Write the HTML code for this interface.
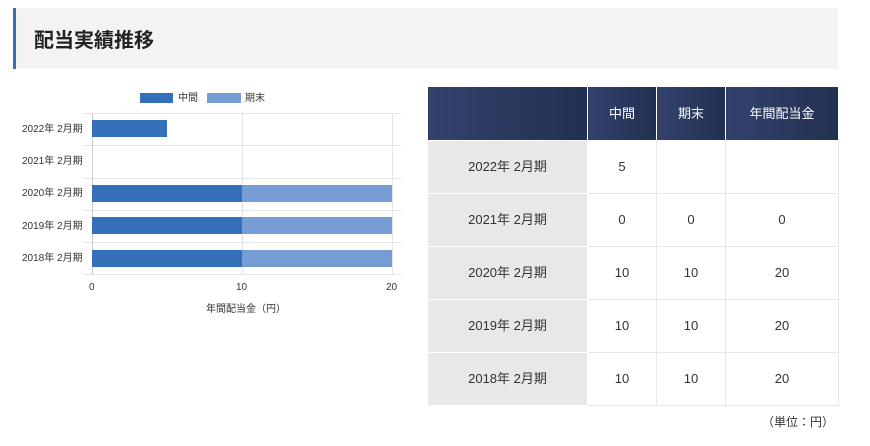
<!DOCTYPE html>
<html><head><meta charset="utf-8"><style>
*{margin:0;padding:0;box-sizing:border-box}
body{width:870px;height:446px;background:#fff;font-family:"Liberation Sans","Noto Sans CJK JP",sans-serif;position:relative;overflow:hidden;color:#333}
.hd{position:absolute;left:13px;top:8px;width:825px;height:61px;background:#f3f3f3;border-left:3px solid #3a6fb5}
.hd span{position:absolute;left:18px;top:16px;font-size:20px;font-weight:bold;color:#222}
.a{position:absolute;font-size:10px;line-height:12px;color:#333;white-space:nowrap}
.bar{position:absolute;height:17px}
.d{background:#3470b9}.l{background:#769dd3}
.g{position:absolute;background:#e4e4e4}
table{position:absolute;left:427px;top:86px;border-collapse:collapse;font-size:13px}
td,th{border:1px solid #e8e8e8;text-align:center;height:53px;line-height:16px;vertical-align:middle}
th{background:linear-gradient(90deg,#33426e,#22304f);color:#fff;font-weight:normal;border-color:#fff;height:54px}
td.y{background:#e8e8e8;border-color:#fff}
</style></head><body>
<div class="hd"><span>配当実績推移</span></div>
<div class="bar d" style="left:140px;top:93px;width:33px;height:10px"></div><div class="a" style="left:178px;top:93px">中間</div>
<div class="bar l" style="left:207px;top:93px;width:34px;height:10px"></div><div class="a" style="left:245px;top:93px">期末</div>
<div class="g" style="left:84px;top:113px;width:317px;height:1px"></div>
<div class="g" style="left:84px;top:145px;width:317px;height:1px"></div>
<div class="g" style="left:84px;top:178px;width:317px;height:1px"></div>
<div class="g" style="left:84px;top:210px;width:317px;height:1px"></div>
<div class="g" style="left:84px;top:242px;width:317px;height:1px"></div>
<div class="g" style="left:84px;top:274px;width:317px;height:1px"></div>
<div class="g" style="left:92px;top:113px;width:1px;height:162px;background:#ccc"></div>
<div class="g" style="left:242px;top:113px;width:1px;height:162px"></div>
<div class="g" style="left:392px;top:113px;width:1px;height:162px"></div>
<div class="bar d" style="left:92px;top:120px;width:75px"></div>
<div class="bar d" style="left:92px;top:185px;width:150px"></div><div class="bar l" style="left:242px;top:185px;width:150px"></div>
<div class="bar d" style="left:92px;top:217px;width:150px"></div><div class="bar l" style="left:242px;top:217px;width:150px"></div>
<div class="bar d" style="left:92px;top:250px;width:150px"></div><div class="bar l" style="left:242px;top:250px;width:150px"></div>
<div class="a" style="left:22px;top:124px">2022年 2月期</div>
<div class="a" style="left:22px;top:156px">2021年 2月期</div>
<div class="a" style="left:22px;top:188px">2020年 2月期</div>
<div class="a" style="left:22px;top:221px">2019年 2月期</div>
<div class="a" style="left:22px;top:253px">2018年 2月期</div>
<div class="a" style="left:89px;top:282px">0</div>
<div class="a" style="left:236px;top:282px">10</div>
<div class="a" style="left:386px;top:282px">20</div>
<div class="a" style="left:206px;top:304px">年間配当金（円）</div>
<table>
<tr><th style="width:160px"></th><th style="width:69px">中間</th><th style="width:69px">期末</th><th style="width:113px">年間配当金</th></tr>
<tr><td class="y">2022年 2月期</td><td>5</td><td></td><td></td></tr>
<tr><td class="y">2021年 2月期</td><td>0</td><td>0</td><td>0</td></tr>
<tr><td class="y">2020年 2月期</td><td>10</td><td>10</td><td>20</td></tr>
<tr><td class="y">2019年 2月期</td><td>10</td><td>10</td><td>20</td></tr>
<tr><td class="y">2018年 2月期</td><td>10</td><td>10</td><td>20</td></tr>
</table>
<div class="a" style="left:762px;top:415px;font-size:12px;line-height:14px">（単位：円）</div>
</body></html>
